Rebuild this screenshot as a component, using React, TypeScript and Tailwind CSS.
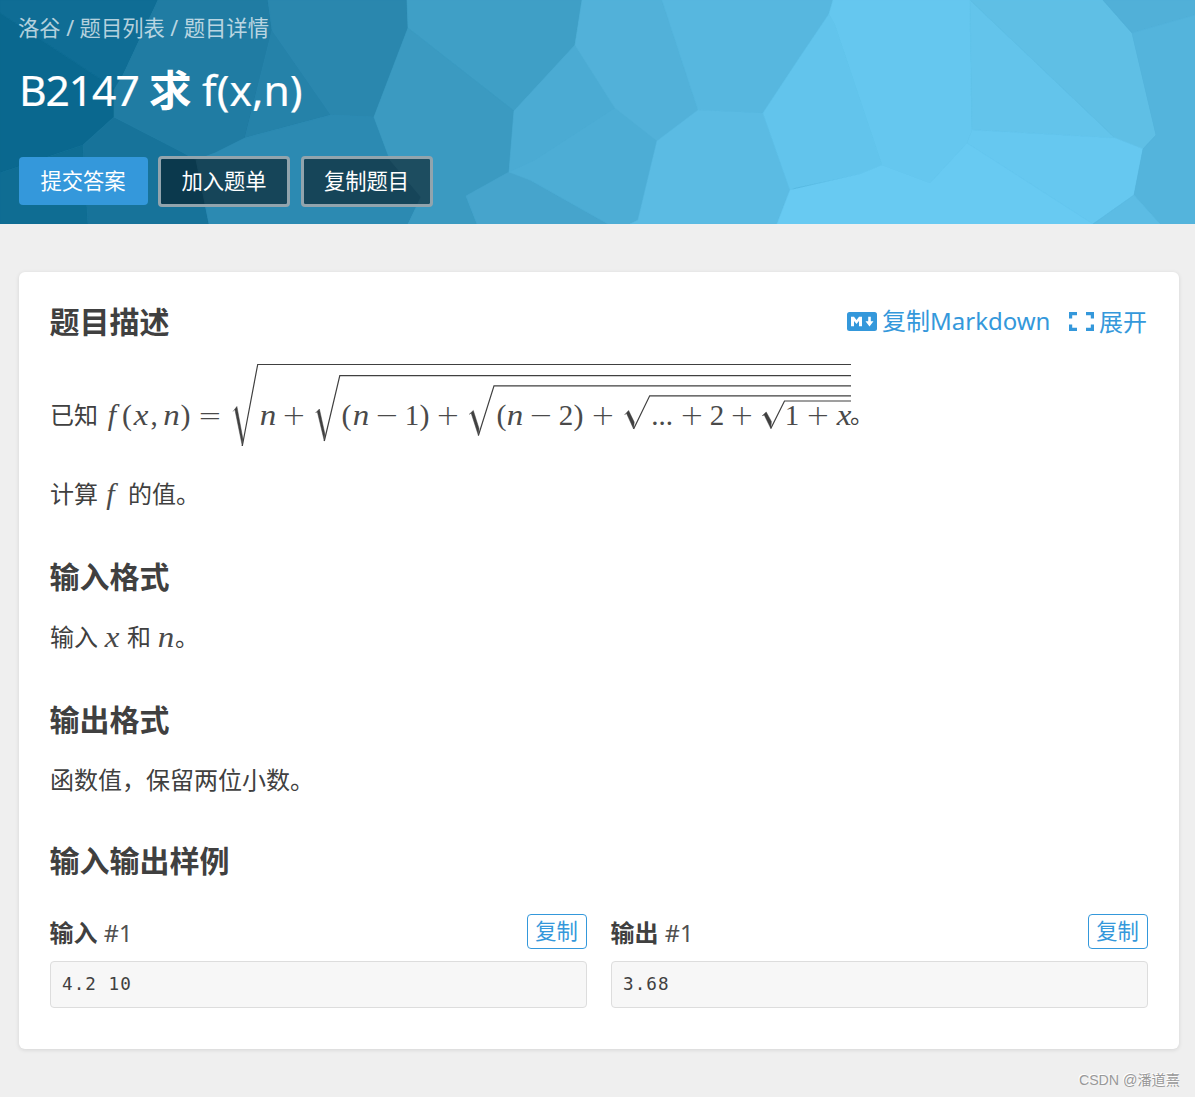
import React from "react";

const cells: [string, string][] = [
  ["0,0 158,0 123,75 114,90 114,88 0,13", "#0f6d95"],
  ["0,13 114,88 114,117 83,145 0,173", "#0a688f"],
  ["0,173 83,145 88,224 0,224", "#0f6d93"],
  ["114,117 182,152 196,160 209,224 88,224 83,145", "#17739a"],
  ["158,0 268,0 272,30 257,90 245,138 215,153 196,160 182,152 114,117 114,90 123,75", "#207ca3"],
  ["272,30 331,115 245,138 257,90", "#2582a9"],
  ["268,0 407,0 408,28 374,117 331,115 272,30", "#2a87ae"],
  ["245,138 331,115 374,117 390,160 421,197 408,224 209,224 196,160 215,153", "#2c8ab2"],
  ["407,0 582,0 575,45 514,111 408,28", "#3f9fc6"],
  ["408,28 514,111 509,172 466,196 477,224 408,224 421,197 390,160 374,117", "#3b9ac1"],
  ["466,196 509,172 530,180 608,224 477,224", "#46a4cc"],
  ["575,45 615,108 535,160 509,172 514,111", "#4babd3"],
  ["615,108 657,141 638,220 630,224 608,224 530,180 509,172 535,160", "#4dadd5"],
  ["582,0 662,0 698,110 657,141 615,108 575,45", "#52b1d9"],
  ["662,0 833,0 829,14 800,57 763,113 698,110", "#57b7df"],
  ["657,141 698,110 763,113 790,190 777,224 630,224 638,220", "#5bbbe3"],
  ["829,14 835,25 882,165 860,174 795,188 790,190 763,113 800,57", "#62c4ec"],
  ["833,0 970,0 972,130 967,143 930,183 882,165 835,25 829,14", "#65c7ef"],
  ["970,0 1115,138 972,130", "#63c4eb"],
  ["970,0 1103,0 1132,33 1156,135 1143,149 1115,138", "#5fbfe5"],
  ["972,130 1115,138 1143,149 1134,195 1093,224 967,143", "#66c8f0"],
  ["790,190 860,174 882,165 930,183 967,143 1093,224 777,224", "#68caf2"],
  ["1103,0 1195,0 1195,15 1132,33", "#51b0d8"],
  ["1132,33 1195,15 1195,224 1160,224 1134,195 1143,149 1156,135", "#54b4dc"],
  ["1134,195 1160,224 1093,224", "#5cbce4"],
];

const op = "font-['DejaVu_Sans'] font-extralight text-[29px]";
const it = "font-['Liberation_Serif'] italic text-[30px] scale-x-110";
const fn = "font-['Liberation_Serif'] italic text-[30px]";
const up = "font-['Liberation_Serif'] text-[29px]";
const par = "font-['Liberation_Serif'] text-[30px]";

const tokens: [string, string, string][] = [
  ["f", fn, "w-[16px]"],
  ["(", par, "ml-[3px] w-[8px]"],
  ["x", it, "ml-[1px] w-[18px]"],
  [",", up, "ml-[1px] w-[6px]"],
  ["n", it, "ml-[5px] w-[19px]"],
  [")", par, "w-[9px]"],
  ["=", op, "ml-[10px] w-[20px]"],
  ["n", it, "ml-[39px] w-[18px]"],
  ["+", op, "ml-[7px] w-[20px]"],
  ["(", par, "ml-[38px] w-[9px]"],
  ["n", it, "ml-[1px] w-[18px]"],
  ["−", op, "ml-[7px] w-[20px]"],
  ["1", up, "ml-[8px] w-[14px]"],
  [")", par, "ml-[1px] w-[9px]"],
  ["+", op, "ml-[9px] w-[20px]"],
  ["(", par, "ml-[39px] w-[9px]"],
  ["n", it, "w-[18px]"],
  ["−", op, "ml-[7px] w-[20px]"],
  ["2", up, "ml-[8px] w-[14px]"],
  [")", par, "ml-[1px] w-[9px]"],
  ["+", op, "ml-[10px] w-[20px]"],
  ["...", up, "ml-[38px] w-[22px]"],
  ["+", op, "ml-[9px] w-[20px]"],
  ["2", up, "ml-[8px] w-[14px]"],
  ["+", op, "ml-[8px] w-[20px]"],
  ["1", up, "ml-[33px] w-[14px]"],
  ["+", op, "ml-[9px] w-[20px]"],
  ["x", it, "ml-[7px] w-[18px]"],
];

// Each radical: start x / y, hook peak x / y, foot x / y, bar start x / y
const radicals = [
  [233, 411.5, 236.9, 406.5, 242.3, 446, 257.7, 364.5],
  [315.5, 413, 319.4, 409, 324.3, 441, 339.8, 375.7],
  [469, 414.5, 473.3, 410.5, 478.4, 435.5, 494, 385.8],
  [624.5, 415, 628.6, 410.5, 633.6, 429, 649.7, 395.8],
  [762, 416, 766.2, 412, 770.8, 428.5, 784.5, 401],
];

function Formula() {
  return (
    <span className="relative ml-[6px] flex h-[90px] w-[747px] shrink-0 text-[#4a4a4a]">
      {tokens.map(([g, font, w], i) => (
        <span key={i} className={`flex h-[90px] shrink-0 justify-center pt-[10px] leading-[90px] whitespace-nowrap ${font} ${w}`}>
          {g}
        </span>
      ))}
      <svg className="absolute left-0 top-0" width="747" height="90" viewBox="104 360 747 90" fill="none" stroke="#404040">
        {radicals.map(([x, y, px, py, fx, fy, bx, by], i) => (
          <g key={i}>
            <path d={`M${x} ${y} L${px} ${py} L${fx + 0.6} ${fy - 7} L${fx} ${fy} L${px - 2} ${py + 3}`} fill="#404040" strokeWidth="0.5" />
            <path d={`M${fx} ${fy} L${bx} ${by} H851`} strokeWidth="1.2" />
          </g>
        ))}
      </svg>
    </span>
  );
}

function Var({ children, className }: { children: string; className: string }) {
  return <span className={`flex shrink-0 justify-center font-['Liberation_Serif'] text-[30px] italic text-[#4a4a4a] ${className}`}>{children}</span>;
}

function Sample({ title, value }: { title: string; value: string }) {
  return (
    <div className="w-[537px]">
      <div className="flex h-[35px] items-center justify-between">
        <div className="ml-[-0.5px] mt-[2px] text-2xl leading-[35px]">
          <b>{title}</b> <span className="text-[23.5px] text-[#505050]">#1</span>
        </div>
        <button className="h-[35px] w-[60px] rounded-[4px] border border-[#3498db] pb-[2px] pr-[1px] text-[21.3px] leading-[31px] text-[#3498db]">复制</button>
      </div>
      <pre className="mt-3 h-[47px] rounded-[4px] border border-[#dddddd] bg-[#f7f7f7] pl-[11px] font-['DejaVu_Sans_Mono'] text-[17.6px] leading-[44px] tracking-[1.05px]">{value}</pre>
    </div>
  );
}

const heading = "h-[40px] ml-[-0.5px] text-[30px] font-bold leading-[40px]";

export default function App() {
  return (
    <div className="flex h-[1097px] w-[1195px] flex-col overflow-hidden bg-[#efefef] font-['Noto_Sans','Noto_Sans_CJK_SC',sans-serif] text-[#404040]">
      <header className="relative h-[224px] shrink-0 overflow-hidden bg-[#3f9fc6] text-white">
        <svg className="absolute inset-0" width="1195" height="224" viewBox="0 0 1195 224">
          {cells.map(([points, color], i) => (
            <polygon key={i} points={points} fill={color} stroke={color} strokeWidth="0.6" />
          ))}
        </svg>
        <div className="relative flex flex-col pl-[19px]">
          <nav className="ml-[-1px] mt-[12px] h-[32px] text-[21.3px] leading-[32px] text-white/70">洛谷 / 题目列表 / 题目详情</nav>
          <h1 className="mt-[15px] flex h-[60px] whitespace-nowrap text-[42.6px] leading-[60px]">
            <span className="w-[130px] tracking-[-1.1px] [-webkit-text-stroke:0.2px_white]">B2147</span>
            <b className="w-[53px]">求</b>
            <span className="[-webkit-text-stroke:0.2px_white]">f(x,n)</span>
          </h1>
          <div className="mt-[37px] flex items-center text-[21.3px]">
            <button className="mb-[2px] h-[48px] w-[129px] rounded-[4px] bg-[#3498db] pr-[1px] leading-[48px]">提交答案</button>
            <button className="ml-[10px] h-[51px] w-[132px] rounded-[4px] border-[3px] border-[#92a4ad] bg-black/50 bg-clip-padding pb-[2px] leading-[43px]">加入题单</button>
            <button className="ml-[11px] h-[51px] w-[132px] rounded-[4px] border-[3px] border-[#92a4ad] bg-black/50 bg-clip-padding pb-[2px] pr-[1px] leading-[43px]">复制题目</button>
          </div>
        </div>
      </header>

      <main className="ml-[19px] mt-[48px] h-[777px] w-[1160px] shrink-0 rounded-[6px] bg-white px-[31px] pt-[30px] shadow-[0_1px_4px_rgba(26,26,26,0.12)]">
        <div className="flex h-[40px] items-center justify-between">
          <h2 className={heading}>题目描述</h2>
          <div className="flex items-center text-2xl leading-[38px] text-[#3498db]">
            <svg width="30" height="20" viewBox="0 0 30 20">
              <rect width="30" height="19" rx="2.5" fill="currentColor" />
              <path d="M4 14.3V4.7h3l2.5 3.2L12 4.7h3v9.6h-3V9l-2.5 3L7 9v5.3z M21.2 4.7h2.6v4.6h2.7l-4 5.2-4-5.2h2.7z" fill="white" />
            </svg>
            <span className="ml-[5px] mt-[-2px] w-[170px] whitespace-nowrap">复制Markdown</span>
            <svg width="25" height="19" viewBox="0 0 25 19" className="ml-[17px] mt-[-1px]" fill="none" stroke="currentColor" strokeWidth="3.2">
              <path d="M1.6 6.5V1.6H8 M17 1.6h6.4v4.9 M1.6 12.5v4.9H8 M17 17.4h6.4v-4.9" />
            </svg>
            <span className="ml-[5px] mt-[-1px] w-[49px] whitespace-nowrap">展开</span>
          </div>
        </div>

        <p className="mt-[18px] flex h-[90px] items-center text-2xl">
          <span className="w-[48px] shrink-0 pt-[20px]">已知</span>
          <Formula />
          <span className="ml-[-1px] pt-[18px]">。</span>
        </p>
        <p className="mt-[24px] flex h-[40px] items-center text-2xl leading-[40px]">
          计算<Var className="ml-[3px] w-[19px]">f</Var>
          <span className="ml-[8px]">的值。</span>
        </p>

        <h2 className={`mt-[43px] ${heading}`}>输入格式</h2>
        <p className="mt-[20px] flex h-[40px] items-center text-2xl leading-[40px]">
          输入<Var className="ml-[5px] w-[18px] scale-x-110">x</Var>
          <span className="ml-[6px]">和</span>
          <Var className="ml-[6px] w-[18px] scale-x-110">n</Var>。
        </p>

        <h2 className={`mt-[43px] ${heading}`}>输出格式</h2>
        <p className="mt-[20px] h-[40px] text-2xl leading-[40px]">函数值，保留两位小数。</p>

        <h2 className={`mt-[41px] ${heading}`}>输入输出样例</h2>
        <div className="mt-[33px] flex gap-6">
          <Sample title="输入" value="4.2 10" />
          <Sample title="输出" value="3.68" />
        </div>
      </main>
      <footer className="mr-[15px] mt-[20px] self-end font-['Liberation_Sans','Noto_Sans_CJK_SC',sans-serif] text-[14.2px] leading-[22px] text-[#999999] [text-shadow:-1px_-1px_0_white]">CSDN @潘道熹</footer>
    </div>
  );
}
